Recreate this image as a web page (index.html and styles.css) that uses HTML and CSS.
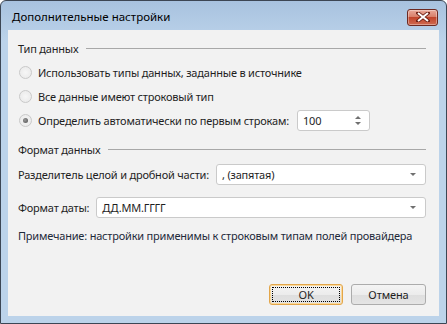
FILE: index.html
```html
<!DOCTYPE html>
<html lang="ru">
<head>
    <meta charset="UTF-8">
    <title>Дополнительные настройки</title>
    <link rel="stylesheet" href="styles.css">
</head>
<body>
    <div class="window">
        <div class="titlebar">
            <span class="title">Дополнительные настройки</span>
            <button class="close-button">
                <svg width="14" height="10" viewBox="0 0 14 10">
                    <path d="M2 1 L12 9 M12 1 L2 9" stroke="#6b1f14" stroke-width="3.6" stroke-linecap="square"/>
                    <path d="M2 1 L12 9 M12 1 L2 9" stroke="#fff" stroke-width="2"/>
                </svg>
            </button>
        </div>

        <div class="client">
            <div class="group-header">
                <span>Тип данных</span>
                <span class="group-line"></span>
            </div>

            <label class="radio-row">
                <span class="radio"></span>
                <span>Использовать типы данных, заданные в источнике</span>
            </label>
            <label class="radio-row">
                <span class="radio"></span>
                <span>Все данные имеют строковый тип</span>
            </label>
            <label class="radio-row">
                <span class="radio checked"></span>
                <span>Определить автоматически по первым строкам:</span>
                <span class="spinbox">
                    <span>100</span>
                    <span class="spin-arrows">
                        <span class="arrow-up"></span>
                        <span class="arrow-down"></span>
                    </span>
                </span>
            </label>

            <div class="group-header second">
                <span>Формат данных</span>
                <span class="group-line"></span>
            </div>

            <div class="field-row">
                <span>Разделитель целой и дробной части:</span>
                <span class="combo"><span>, (запятая)</span><span class="arrow-down"></span></span>
            </div>
            <div class="field-row date-row">
                <span>Формат даты:</span>
                <span class="combo"><span>ДД.ММ.ГГГГ</span><span class="arrow-down"></span></span>
            </div>

            <p class="note">Примечание: настройки применимы к строковым типам полей провайдера</p>

            <div class="buttons">
                <button class="btn btn-default"><span class="focus-rect">OK</span></button>
                <button class="btn">Отмена</button>
            </div>
        </div>
    </div>
</body>
</html>
```

FILE: styles.css
```css
body {
    margin: 0;
    font-family: 'Noto Sans', sans-serif;
    font-size: 11px;
    letter-spacing: -0.2px;
    color: #1e1e1e;
    background-color: #ffffff;
}

.window {
    width: 447px;
    height: 324px;
    box-sizing: border-box;
    border: 1px solid #3c4654;
    border-radius: 6px 6px 0 0;
    background: linear-gradient(to bottom, #a8c2df, #bcd3ea 40px);
    padding: 0 7px 7px 7px;
    display: flex;
    flex-direction: column;
}

.titlebar {
    height: 29px;
    display: flex;
    align-items: center;
    justify-content: space-between;
}

.title {
    color: #000;
    font-size: 11.5px;
    letter-spacing: 0;
    padding-left: 4px;
    padding-top: 2px;
}

.close-button {
    width: 31px;
    height: 17px;
    margin-right: 1px;
    margin-top: 3px;
    border: 1px solid #6d2a22;
    border-radius: 3px;
    background: linear-gradient(to bottom, #e9a99a 0%, #d87f6a 45%, #c1452c 50%, #cf6a50 100%);
    padding: 0;
    display: flex;
    align-items: center;
    justify-content: center;
    box-shadow: inset 0 0 0 1px rgba(255, 255, 255, 0.35);
}

.client {
    flex: 1;
    background-color: #f2f2f2;
    padding: 6px 13px 11px 10px;
    display: flex;
    flex-direction: column;
}

.group-header {
    height: 24px;
    display: flex;
    align-items: center;
    gap: 8px;
}

.group-header.second {
    margin-top: 5px;
}

.group-line {
    flex: 1;
    height: 1px;
    background-color: #a8a8a8;
}

.radio-row {
    height: 24px;
    display: flex;
    align-items: center;
    gap: 6px;
    padding-left: 1px;
}

.radio {
    width: 11px;
    height: 11px;
    border: 1px solid #c9c9c9;
    border-radius: 50%;
    background: radial-gradient(circle, #f6f6f6 0%, #ececec 70%, #e0e0e0 100%);
    display: flex;
    align-items: center;
    justify-content: center;
}

.radio.checked::after {
    content: '';
    width: 5px;
    height: 5px;
    border-radius: 50%;
    background: radial-gradient(circle at 40% 40%, #9a9a9a, #4e4e4e);
}

.spinbox {
    margin-left: 2px;
    width: 73px;
    height: 21px;
    box-sizing: border-box;
    border: 1px solid #cacaca;
    border-radius: 3px;
    background-color: #fff;
    display: flex;
    align-items: center;
    justify-content: space-between;
    padding: 0 8px 0 5px;
}

.spin-arrows {
    display: flex;
    flex-direction: column;
    gap: 3px;
}

.arrow-up {
    width: 0;
    height: 0;
    border-left: 3px solid transparent;
    border-right: 3px solid transparent;
    border-bottom: 3px solid #707070;
}

.arrow-down {
    width: 0;
    height: 0;
    border-left: 3px solid transparent;
    border-right: 3px solid transparent;
    border-top: 3px solid #707070;
}

.field-row {
    height: 26px;
    display: flex;
    align-items: center;
    gap: 7px;
}

.date-row {
    margin-top: 7px;
}

.combo {
    flex: 1;
    height: 21px;
    box-sizing: border-box;
    border: 1px solid #cacaca;
    border-radius: 3px;
    background-color: #fff;
    display: flex;
    align-items: center;
    justify-content: space-between;
    padding: 0 9px 0 5px;
}

.note {
    margin: 8px 0 0 0;
    color: #1e2a3a;
}

.buttons {
    margin-top: auto;
    display: flex;
    justify-content: flex-end;
    gap: 8px;
}

.btn {
    width: 75px;
    height: 21px;
    font-family: inherit;
    font-size: 11px;
    letter-spacing: -0.1px;
    color: #1e1e1e;
    border: 1px solid #acacac;
    border-radius: 3px;
    background: linear-gradient(to bottom, #f4f4f4 0%, #ececec 50%, #dedede 51%, #e4e4e4 100%);
    padding: 0;
    display: flex;
    align-items: center;
    justify-content: center;
}

.btn-default {
    width: 74px;
    border-color: #e3a64a;
    box-shadow: inset 0 0 0 1px #fbd99a;
}

.focus-rect {
    width: 66px;
    height: 13px;
    line-height: 13px;
    border: 1px dotted #000;
    text-align: center;
}
```
